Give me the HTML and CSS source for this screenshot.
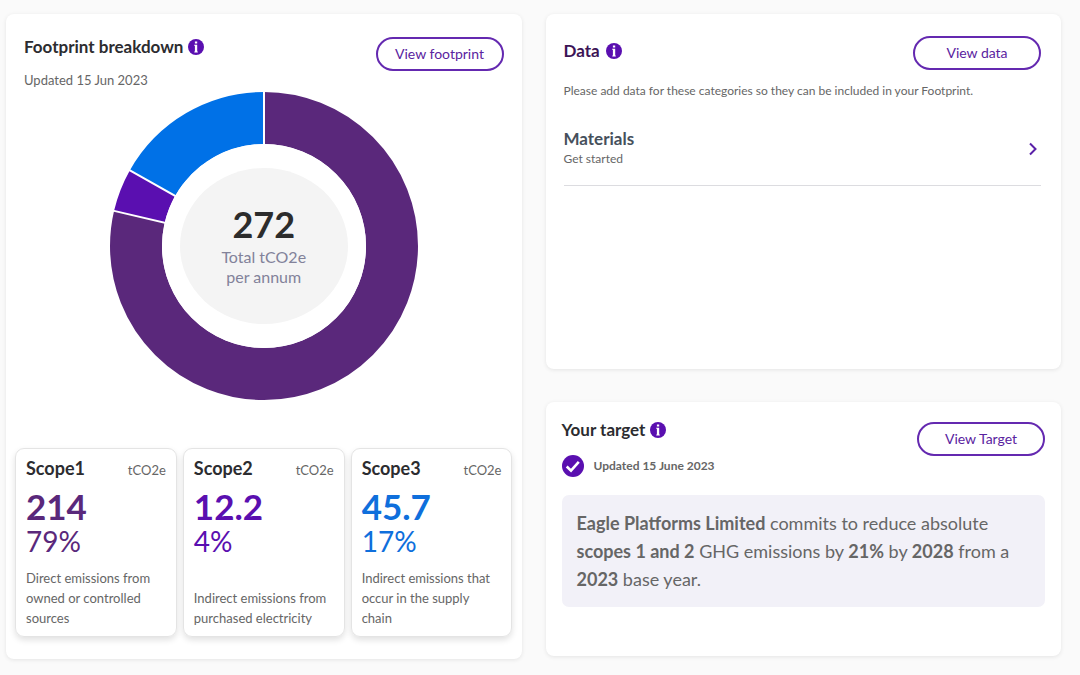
FILE: index.html
```html
<!DOCTYPE html>
<html lang="en">
<head>
<meta charset="utf-8">
<meta name="viewport" content="width=device-width, initial-scale=1">
<title>Footprint dashboard</title>
<link rel="stylesheet" href="styles.css">
</head>
<body>
<svg class="sprite" aria-hidden="true">
  <symbol id="info" viewBox="0 0 16 16">
    <circle cx="8" cy="8" r="8" fill="#5a0fb0"/>
    <path d="M6.9 2.6h2.3v2H6.9zM6.2 5.8h3v6.6h.6v1H6.3v-1h.6V6.8h-.7z" fill="#fff"/>
  </symbol>
</svg>
<main class="dashboard">
  <section class="card footprint">
    <header class="card-header">
      <div class="heading">
        <h2 class="title">Footprint breakdown <svg class="info"><use href="#info"/></svg></h2>
        <p class="updated">Updated 15 Jun 2023</p>
      </div>
      <button class="pill" type="button">View footprint</button>
    </header>
    <div class="chart">
      <svg class="donut" viewBox="0 0 310 310" role="img" aria-label="Emissions by scope">
        <g transform="rotate(-90 155 155)" fill="none" stroke-width="52">
          <circle cx="155" cy="155" r="128" pathLength="272" stroke="#5a287b" stroke-dasharray="214 58"/>
          <circle cx="155" cy="155" r="128" pathLength="272" stroke="#5a0fb0" stroke-dasharray="12.2 259.8" stroke-dashoffset="-214"/>
          <circle cx="155" cy="155" r="128" pathLength="272" stroke="#0071e7" stroke-dasharray="45.8 226.2" stroke-dashoffset="-226.2"/>
        </g>
        <path d="M155 155V0M155 155L4 119.6M155 155L20 78.9" stroke="#fff" stroke-width="2"/>
        <circle cx="155" cy="155" r="102" fill="#fff"/>
        <ellipse cx="155" cy="155" rx="84" ry="78" fill="#f4f4f4"/>
      </svg>
      <div class="total">
        <strong class="total-value">272</strong>
        <span class="total-label">Total tCO2e<br>per annum</span>
      </div>
    </div>
    <div class="scopes">
      <article class="scope scope-one">
        <header class="scope-header"><h3 class="scope-name">Scope1</h3><span class="unit">tCO2e</span></header>
        <strong class="amount">214</strong>
        <span class="percent">79%</span>
        <p class="description">Direct emissions from owned or controlled sources</p>
      </article>
      <article class="scope scope-two">
        <header class="scope-header"><h3 class="scope-name">Scope2</h3><span class="unit">tCO2e</span></header>
        <strong class="amount">12.2</strong>
        <span class="percent">4%</span>
        <p class="description">Indirect emissions from purchased electricity</p>
      </article>
      <article class="scope scope-three">
        <header class="scope-header"><h3 class="scope-name">Scope3</h3><span class="unit">tCO2e</span></header>
        <strong class="amount">45.7</strong>
        <span class="percent">17%</span>
        <p class="description">Indirect emissions that occur in the supply chain</p>
      </article>
    </div>
  </section>
  <div class="column">
    <section class="card data">
      <header class="card-header">
        <h2 class="title title-purple">Data <svg class="info"><use href="#info"/></svg></h2>
        <button class="pill" type="button">View data</button>
      </header>
      <p class="hint">Please add data for these categories so they can be included in your Footprint.</p>
      <a class="category" href="#materials">
        <span class="category-text"><strong class="category-name">Materials</strong><span class="category-status">Get started</span></span>
        <svg class="chevron" viewBox="0 0 8 14"><path d="M1 1.5L6.5 7L1 12.5" fill="none" stroke="#5a20a8" stroke-width="2"/></svg>
      </a>
    </section>
    <section class="card target">
      <header class="card-header">
        <div class="heading">
          <h2 class="title">Your target <svg class="info"><use href="#info"/></svg></h2>
          <p class="status">
            <svg class="check" viewBox="0 0 22 22"><circle cx="11" cy="11" r="11" fill="#5a0fb0"/><path d="M4.7 11.5L9 15.6L16.8 6.8" fill="none" stroke="#fff" stroke-width="2.6"/></svg>
            Updated 15 June 2023
          </p>
        </div>
        <button class="pill" type="button">View Target</button>
      </header>
      <p class="commitment"><b>Eagle Platforms Limited</b> commits to reduce absolute <b>scopes 1 and 2</b> GHG emissions by <b>21%</b> by <b>2028</b> from a <b>2023</b> base year.</p>
    </section>
  </div>
</main>
</body>
</html>
```
FILE: styles.css
```css
* { box-sizing: border-box; }
body {
  margin: 0;
  background: #fafafa;
  color: #666;
  font: 13px/20px Lato, "Open Sans", sans-serif;
}
h2, h3, p { margin: 0; }
.sprite { position: absolute; width: 0; height: 0; }
.dashboard {
  display: grid;
  grid-template-columns: 1fr 1fr;
  gap: 24px;
  align-items: start;
  padding: 14px 19px 16px 6px;
}
.card {
  background: #fff;
  border-radius: 8px;
  box-shadow: 0 1px 4px rgba(0, 0, 0, 0.09);
}
.card-header { display: flex; justify-content: space-between; align-items: flex-start; }
.title {
  display: flex;
  align-items: center;
  gap: 5px;
  color: #2c2c30;
  font-size: 17px;
  line-height: 20px;
}
.title-purple { color: #3c1456; gap: 6px; }
.info { width: 16px; height: 16px; }
.pill {
  width: 128px;
  height: 34px;
  padding: 0;
  border: 2px solid #6429b0;
  border-radius: 17px;
  background: #fff;
  color: #5a23a0;
  font: 14px/20px Lato, "Open Sans", sans-serif;
  cursor: pointer;
}
.footprint { padding: 23px 9px 22px; }
.footprint .card-header { height: 54px; padding: 0 9px; }
.updated { margin-top: 13px; }
.chart { display: grid; place-items: center; margin-bottom: 47px; }
.donut, .total { grid-area: 1 / 1; }
.donut { display: block; width: 310px; height: 310px; }
.total { display: flex; flex-direction: column; align-items: center; padding-bottom: 4px; text-align: center; }
.total-value { color: #2c2c2c; font-size: 36px; line-height: 46px; }
.total-label { color: #82829a; font-size: 16px; line-height: 20px; }
.scopes { display: grid; grid-template-columns: repeat(3, 1fr); gap: 6px; }
.scope {
  display: flex;
  flex-direction: column;
  min-height: 189px;
  padding: 8px 10px;
  border: 1px solid #e4e4e4;
  border-radius: 9px;
  box-shadow: 0 3px 6px rgba(0, 0, 0, 0.12);
}
.scope-header { display: flex; justify-content: space-between; align-items: baseline; }
.scope-name { color: #2c2c30; font-size: 18px; line-height: 22px; }
.amount { font-size: 35px; line-height: 36px; margin-top: 8px; }
.percent { font-size: 28px; line-height: 34px; }
.description { margin-top: auto; }
.scope-one { color: #5a287b; }
.scope-two { color: #5a0fb0; }
.scope-three { color: #0f6fdc; }
.unit, .description { color: #666; }
.column { display: flex; flex-direction: column; gap: 33px; }
.data { min-height: 355px; padding: 22px 20px 20px 18px; }
.data .title { margin-top: 5px; }
.hint { margin-top: 11px; font-size: 12px; }
.category {
  display: flex;
  justify-content: space-between;
  align-items: center;
  margin-top: 28px;
  padding: 0 4px 16px 0;
  border-bottom: 1px solid #dcdce0;
  color: inherit;
  text-decoration: none;
}
.category-text { display: flex; flex-direction: column; }
.category-name { color: #46505c; font-size: 17px; }
.category-status { font-size: 12px; }
.chevron { width: 8px; height: 14px; }
.target { min-height: 254px; padding: 18px 16px; }
.target .pill { margin-top: 2px; }
.status { display: flex; align-items: center; gap: 10px; margin-top: 15px; font-size: 12px; font-weight: 700; }
.check { width: 22px; height: 22px; }
.commitment {
  margin-top: 18px;
  padding: 14px 15px;
  border-radius: 7px;
  background: #f2f1f8;
  font-size: 18px;
  line-height: 28px;
}
```
